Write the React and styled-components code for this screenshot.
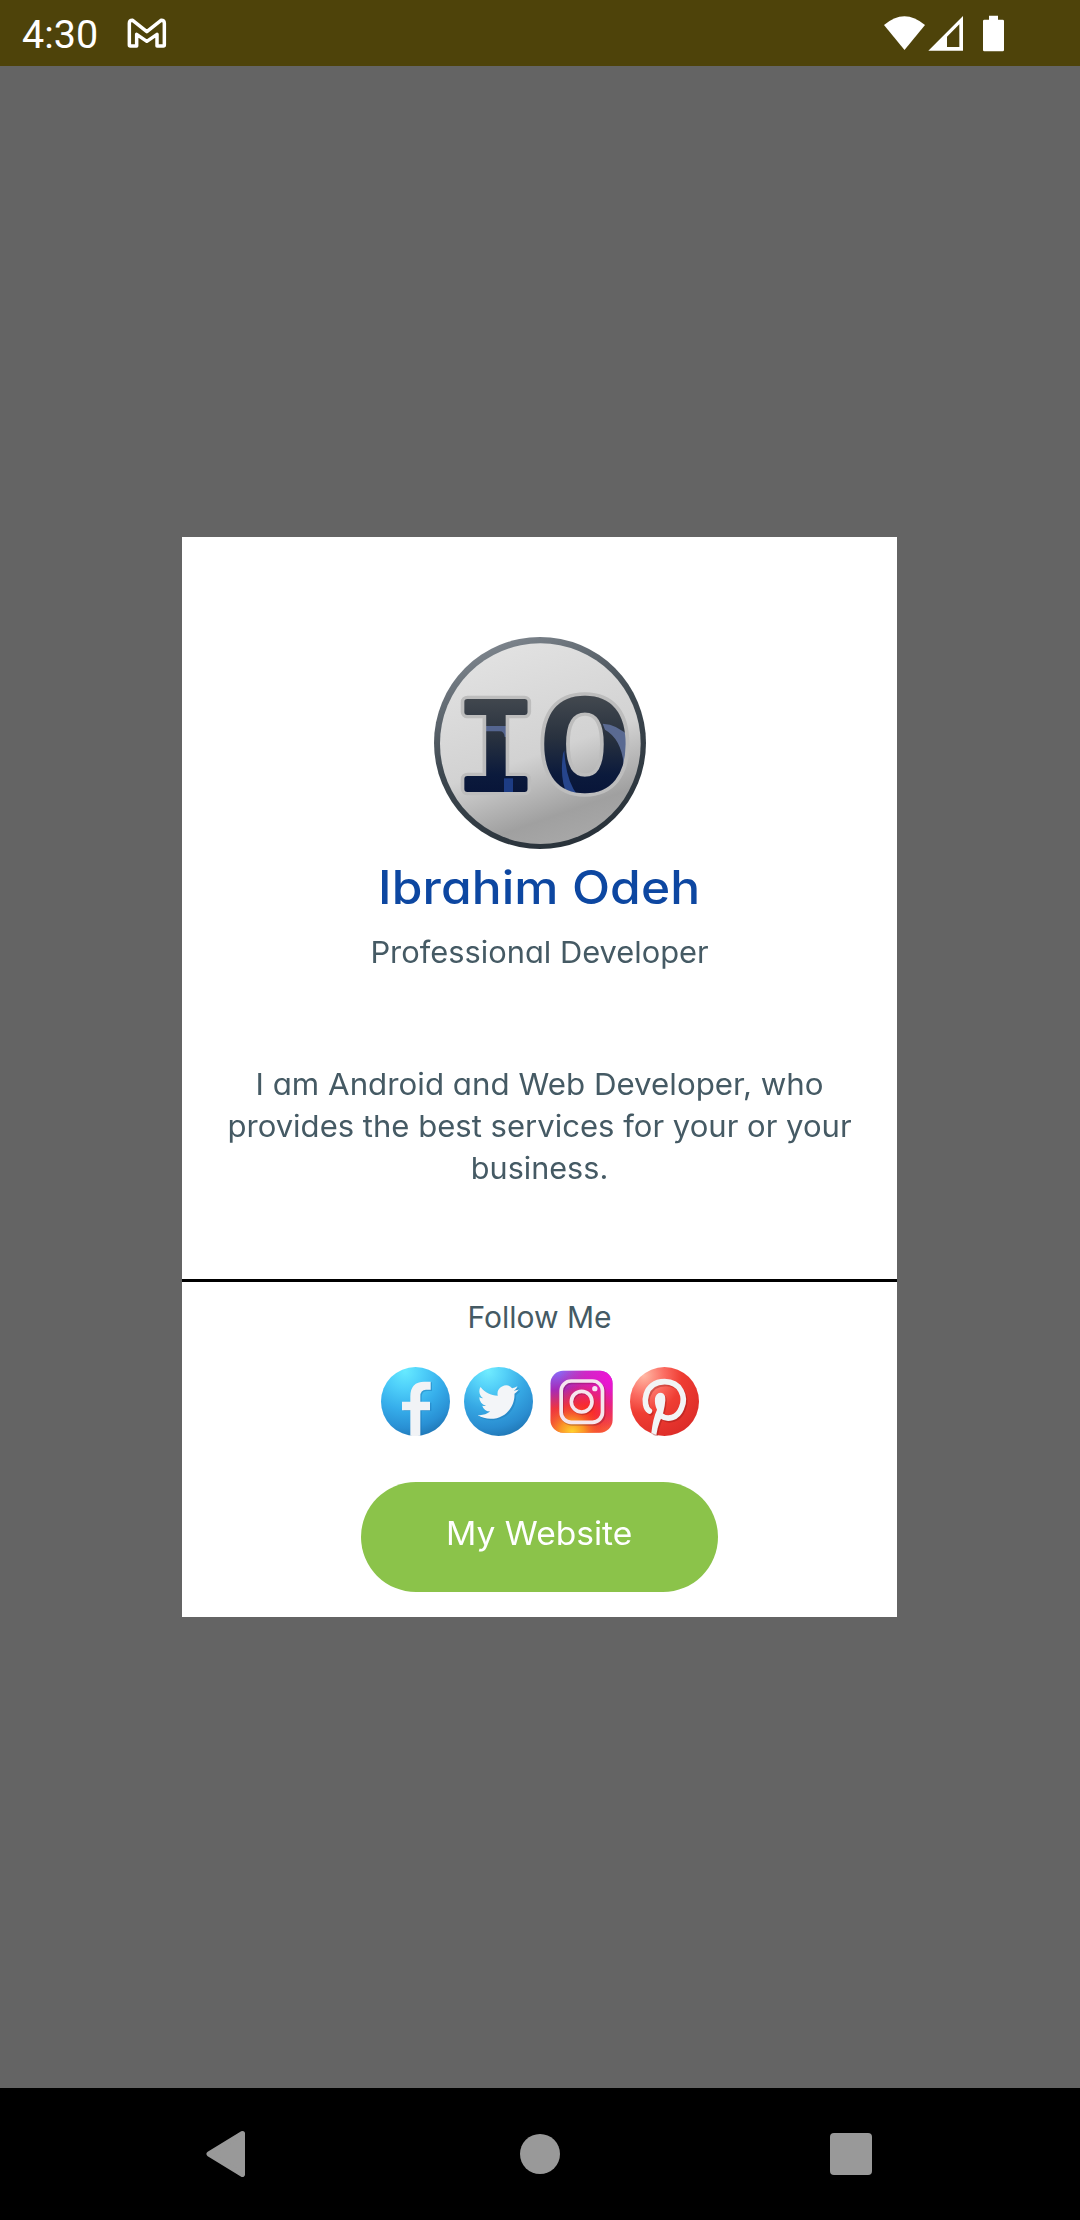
import React from "react";
import styled, { createGlobalStyle } from "styled-components";

const Global = createGlobalStyle`
  * { box-sizing: border-box; }
  body { margin: 0; background: #646464; }
`;

const Screen = styled.div`
  display: flex;
  flex-direction: column;
  width: 1080px;
  height: 2220px;
  font-family: Inter, "Open Sans", sans-serif;
  font-feature-settings: "cv11" 1;
  color: #455a64;
`;

const StatusBar = styled.header`
  display: flex;
  align-items: center;
  height: 66px;
  padding: 0 73px 0 22px;
  background: #4e430a;
`;

const Clock = styled.span`
  width: 105px;
  padding-top: 3px;
  font: 400 39.5px/46px Roboto, sans-serif;
  color: #fff;
`;

const StatusIcons = styled.div`
  display: flex;
  margin-left: auto;
`;

const Backdrop = styled.main`
  flex: 1;
  display: flex;
  align-items: center;
  justify-content: center;
  padding-right: 1px;
  background: #646464;
`;

const Card = styled.section`
  display: flex;
  flex-direction: column;
  align-items: center;
  width: 715px;
  height: 1080px;
  padding: 100px 0 25px;
  background: #fff;
`;

const AvatarArt = styled.svg`
  display: block;
  flex: none;
  width: 212px;
  height: 212px;
`;

const Monogram = styled.g`
  font-family: "Liberation Mono", monospace;
  font-weight: 400;
  font-size: 390px;
  text-anchor: middle;
  stroke-linejoin: round;
`;

const Name = styled.h1`
  margin: 8px 0 0;
  font-size: 46px;
  line-height: 60px;
  font-weight: 500;
  letter-spacing: 0.1px;
  transform: scaleX(1.08);
  color: #0d47a1;
`;

const Copy = styled.p`
  margin: ${(p) => p.$top}px 0 0;
  font-size: 30px;
  line-height: 42px;
  text-align: center;
  white-space: nowrap;
`;

const Line = styled.span`
  display: block;
  transform: scaleX(${(p) => p.$stretch || 1});
`;

const Divider = styled.hr`
  width: 100%;
  height: 3px;
  margin: 90px 0 0;
  border: 0;
  background: #000;
`;

const Socials = styled.div`
  display: flex;
  gap: 14px;
  margin-top: 29px;
`;

const SiteButton = styled.button`
  display: flex;
  align-items: center;
  justify-content: center;
  width: 357px;
  height: 110px;
  margin-top: 46px;
  padding: 0 0 8px;
  border: 0;
  border-radius: 55px;
  background: #8bc34a;
  color: #fff;
  font: inherit;
  font-size: 32.5px;
`;

const NavBar = styled.nav`
  display: flex;
  align-items: center;
  justify-content: space-between;
  height: 132px;
  padding: 0 208px 0 206px;
  background: #000;
`;

const Gmail = () => (
  <svg width="40" height="30" viewBox="380 52 120 90" fill="none" stroke="#fff" strokeWidth="10.5" strokeLinejoin="round">
    <path d="M387 68Q387 58 397 59L439.500 93L482 59Q492 58 492 68V133Q492 136 489 136H470V101L439.500 122L409 101V136H390Q387 136 387 133Z" />
  </svg>
);

const Signals = () => (
  <svg width="124" height="40" viewBox="126 37 372 120">
    <path d="M129 73Q190 20 252 73L190.500 148Z" fill="#fff" />
    <path fillRule="evenodd" d="M262 150L366 46V150ZM318 139H355V71L318 108Z" fill="#fff" />
    <path d="M444 45H471V57H485Q489 57 489 61V148Q489 152 485 152H430Q426 152 426 148V61Q426 57 430 57H444Z" fill="#fff" />
  </svg>
);

const Letters = ({ grow = 0 }) => (
  <>
    <text transform="translate(225 506) scale(1.09 1.02)" strokeWidth={17 + grow}>I</text>
    <text transform="translate(492 506) scale(1.14 1.02)" strokeWidth={19 + grow}>O</text>
  </>
);

const Avatar = () => (
  <AvatarArt viewBox="39 50 636 636">
    <defs>
      <linearGradient id="rim" x1=".2" y1="0" x2=".6" y2="1">
        <stop offset="0" stopColor="#858c94" />
        <stop offset=".5" stopColor="#3d474f" />
        <stop offset="1" stopColor="#29323a" />
      </linearGradient>
      <linearGradient id="face" x1=".3" y1="0" x2=".65" y2="1">
        <stop offset="0" stopColor="#e2e2e2" />
        <stop offset=".55" stopColor="#d2d2d2" />
        <stop offset=".85" stopColor="#a0a0a0" />
        <stop offset="1" stopColor="#a8a8a8" />
      </linearGradient>
      <linearGradient id="ink" gradientUnits="userSpaceOnUse" x1="0" y1="235" x2="0" y2="520">
        <stop offset="0" stopColor="#41474e" />
        <stop offset=".4" stopColor="#29323f" />
        <stop offset=".8" stopColor="#0b1a3c" />
        <stop offset="1" stopColor="#081539" />
      </linearGradient>
      <mask id="inkMask" maskUnits="userSpaceOnUse" x="39" y="50" width="636" height="636">
        <Monogram fill="#fff" stroke="#fff">
          <Letters />
        </Monogram>
      </mask>
    </defs>
    <circle cx="357" cy="368" r="318" fill="url(#rim)" />
    <circle cx="358" cy="370" r="301" fill="url(#face)" />
    <Monogram fill="#bdbdbd" stroke="#bdbdbd">
      <Letters grow={20} />
    </Monogram>
    <g mask="url(#inkMask)">
      <rect x="100" y="220" width="540" height="320" fill="url(#ink)" />
      <path d="M190 317H262V350H251Q250 333 236 333H190Z" fill="#546590" />
      <path d="M249 474H276V530H249Z" fill="#1d3c84" />
      <path d="M545 310Q590 312 625 350V430H608Q600 355 552 328Z" fill="#5a6a92" />
      <path d="M430 390Q434 480 470 525H440Q415 480 426 400Z" fill="#26458c" />
    </g>
  </AvatarArt>
);

const Facebook = () => (
  <svg width="69" height="69" viewBox="30 52 207 207">
    <defs>
      <radialGradient id="fb" cx=".35" cy=".06" r="1">
        <stop offset="0" stopColor="#66eaff" />
        <stop offset=".25" stopColor="#4fd0fa" />
        <stop offset=".55" stopColor="#36aeeb" />
        <stop offset=".82" stopColor="#2990d4" />
        <stop offset="1" stopColor="#1f74b2" />
      </radialGradient>
    </defs>
    <circle cx="133.500" cy="155.500" r="103.500" fill="url(#fb)" />
    <path d="M123 258V184H98V159H123V142Q123 98 165 98H183V124H168Q152 124 152 142V159H181V184H152V257Z" fill="#1c74b4" opacity=".45" />
    <path d="M118 258V182H93V156H118V140Q118 96 160 96H179V120H165Q148 120 148 140V156H177V182H148V258Q133 260 118 258Z" fill="#f1f3f6" />
  </svg>
);

const Twitter = () => (
  <svg width="69" height="69" viewBox="279 52 207 207">
    <defs>
      <radialGradient id="tw" cx=".35" cy=".06" r="1">
        <stop offset="0" stopColor="#70ecff" />
        <stop offset=".25" stopColor="#54d0f8" />
        <stop offset=".55" stopColor="#36a8e4" />
        <stop offset=".82" stopColor="#2a8dd0" />
        <stop offset="1" stopColor="#1f74b2" />
      </radialGradient>
      <path id="bird" d="M23.953 4.570a10 10 0 0 1-2.825.775 4.958 4.958 0 0 0 2.163-2.723c-.951.555-2.005.959-3.127 1.184a4.920 4.920 0 0 0-8.384 4.482C7.690 8.095 4.067 6.130 1.640 3.162a4.822 4.822 0 0 0-.666 2.475c0 1.710.870 3.213 2.188 4.096a4.904 4.904 0 0 1-2.228-.616v.060a4.923 4.923 0 0 0 3.946 4.827 4.996 4.996 0 0 1-2.212.085 4.936 4.936 0 0 0 4.604 3.417 9.867 9.867 0 0 1-6.102 2.105c-.390 0-.779-.023-1.170-.067a13.995 13.995 0 0 0 7.557 2.209c9.053 0 13.998-7.496 13.998-13.985 0-.210 0-.420-.015-.630A9.935 9.935 0 0 0 24 4.590z" />
    </defs>
    <circle cx="382.500" cy="155.500" r="103.500" fill="url(#tw)" />
    <use href="#bird" transform="translate(325 100) scale(5.125)" fill="#1c70b0" opacity=".4" />
    <use href="#bird" transform="translate(320 96) scale(5.125)" fill="#f3f5f8" />
  </svg>
);

const Instagram = () => (
  <svg width="69" height="69" viewBox="31.500 49 207 207">
    <defs>
      <linearGradient id="ig" x1=".1" y1="0" x2=".2" y2="1">
        <stop offset="0" stopColor="#8a6cfa" />
        <stop offset=".3" stopColor="#a52bb8" />
        <stop offset=".6" stopColor="#ee3540" />
        <stop offset="1" stopColor="#f8603a" />
      </linearGradient>
      <radialGradient id="igPink" cx="1" cy=".1" r=".85">
        <stop offset="0" stopColor="#f212d8" />
        <stop offset=".5" stopColor="#e01ac0" stopOpacity=".8" />
        <stop offset="1" stopColor="#e01a80" stopOpacity="0" />
      </radialGradient>
      <radialGradient id="igGold" cx=".35" cy="1" r=".5">
        <stop offset="0" stopColor="#ffd72e" />
        <stop offset=".4" stopColor="#fba024" stopOpacity=".85" />
        <stop offset="1" stopColor="#f03a28" stopOpacity="0" />
      </radialGradient>
      <radialGradient id="igRed" cx=".6" cy=".65" r=".5">
        <stop offset="0" stopColor="#ff2a1c" />
        <stop offset="1" stopColor="#f02a3c" stopOpacity="0" />
      </radialGradient>
    </defs>
    {["ig", "igPink", "igRed", "igGold"].map((id) => (
      <rect key={id} x="42" y="60" width="186" height="186" rx="38" fill={`url(#${id})`} />
    ))}
    <g fill="none" stroke="#6b0f35" strokeOpacity=".3" strokeWidth="11">
      <rect x="77" y="95" width="125" height="125" rx="30" />
      <circle cx="138" cy="157" r="31" />
    </g>
    <g fill="none" stroke="#f6e6ee" strokeWidth="11">
      <rect x="74" y="91" width="124" height="124" rx="30" />
      <circle cx="135.500" cy="153" r="31" />
    </g>
    <circle cx="175" cy="114" r="8" fill="#f8e4f4" />
  </svg>
);

const Pinterest = () => (
  <svg width="69" height="69" viewBox="282 52 207 207">
    <defs>
      <radialGradient id="pin" cx=".2" cy=".12" r="1">
        <stop offset="0" stopColor="#ffb8a4" />
        <stop offset=".3" stopColor="#fb6c62" />
        <stop offset=".55" stopColor="#ef3d33" />
        <stop offset="1" stopColor="#dc2c28" />
      </radialGradient>
      <g id="pinMark">
        <path d="M340 184C318 168 322 96 386 96C434 96 452 142 436 176C424 206 394 212 376 198" fill="none" strokeWidth="17" strokeLinecap="round" />
        <path d="M357 146Q360 129 375 129Q390 132 388 152Q385 190 371 216Q364 234 361 256L346 250Q351 205 363 180Q355 165 357 146Z" stroke="none" />
      </g>
    </defs>
    <circle cx="385.500" cy="155.500" r="103.500" fill="url(#pin)" />
    <use href="#pinMark" x="4" y="5" fill="#8c1414" stroke="#8c1414" opacity=".35" />
    <use href="#pinMark" fill="#f2f4f6" stroke="#f2f4f6" />
  </svg>
);

const BackIcon = () => (
  <svg width="39" height="46" viewBox="0 0 39 46">
    <path d="M36.500 2.500L3 23L36.500 43.500Z" fill="#999" stroke="#999" strokeWidth="5" strokeLinejoin="round" />
  </svg>
);

const HomeIcon = styled.span`
  width: 40px;
  height: 40px;
  margin-left: 5px;
  border-radius: 50%;
  background: #999;
`;

const RecentIcon = styled.span`
  width: 42px;
  height: 42px;
  border-radius: 4px;
  background: #999;
`;

export default function App() {
  return (
    <Screen>
      <Global />
      <StatusBar>
        <Clock>4:30</Clock>
        <Gmail />
        <StatusIcons>
          <Signals />
        </StatusIcons>
      </StatusBar>
      <Backdrop>
        <Card>
          <Avatar />
          <Name>Ibrahim Odeh</Name>
          <Copy $top={14}>
            <Line $stretch={1.028}>Professional Developer</Line>
          </Copy>
          <Copy $top={90}>
            <Line $stretch={1.043}>I am Android and Web Developer, who</Line>
            <Line $stretch={1.035}>provides the best services for your or your</Line>
            <Line $stretch={1.02}>business.</Line>
          </Copy>
          <Divider />
          <Copy $top={14}>
            <Line>Follow Me</Line>
          </Copy>
          <Socials>
            <Facebook />
            <Twitter />
            <Instagram />
            <Pinterest />
          </Socials>
          <SiteButton>
            <Line $stretch={1.032}>My Website</Line>
          </SiteButton>
        </Card>
      </Backdrop>
      <NavBar>
        <BackIcon />
        <HomeIcon />
        <RecentIcon />
      </NavBar>
    </Screen>
  );
}
